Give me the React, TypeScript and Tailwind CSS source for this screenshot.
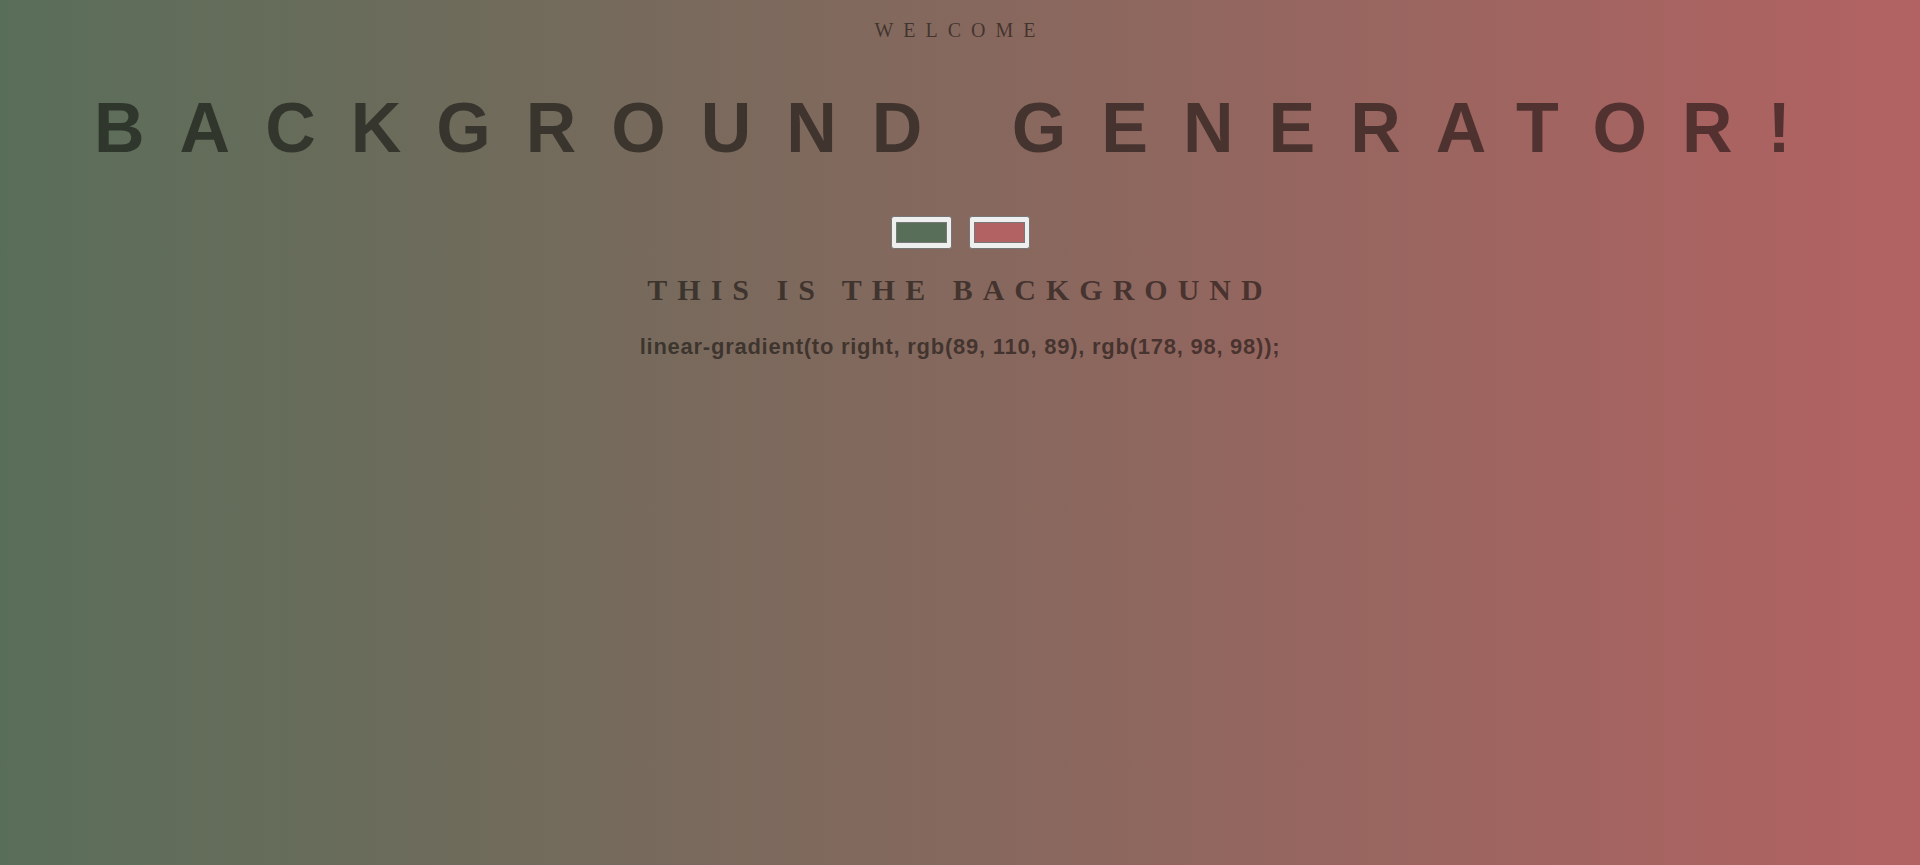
import { useState } from "react";

const hexToRgb = (hex: string) => {
  const n = parseInt(hex.slice(1), 16);
  return `rgb(${(n >> 16) & 255}, ${(n >> 8) & 255}, ${n & 255})`;
};

export default function App() {
  const [color1, setColor1] = useState("#596e59");
  const [color2, setColor2] = useState("#b26262");

  const gradient = `linear-gradient(to right, ${hexToRgb(color1)}, ${hexToRgb(color2)})`;

  return (
    <div
      className="min-h-screen w-full text-center uppercase text-black/50"
      style={{ background: gradient }}
    >
      <p className="pt-[19px] text-[20px] leading-[23px] tracking-[10px] font-['Liberation_Serif',serif]">
        Welcome
      </p>

      <h1 className="mt-[46px] text-[70px] leading-[80px] font-bold tracking-[35px] font-['Liberation_Sans',Arial,sans-serif]">
        Background Generator!
      </h1>

      <div className="mt-[48px] flex justify-center gap-[17px]">
        <input
          type="color"
          value={color1}
          onChange={(e) => setColor1(e.target.value)}
          className="w-[61px] h-[33px] px-[2px] py-[1px] bg-[#efefef] border border-[#767676] rounded-[3px] cursor-pointer"
        />
        <input
          type="color"
          value={color2}
          onChange={(e) => setColor2(e.target.value)}
          className="w-[61px] h-[33px] px-[2px] py-[1px] bg-[#efefef] border border-[#767676] rounded-[3px] cursor-pointer"
        />
      </div>

      <h2 className="mt-[24px] text-[30px] leading-[34px] font-bold tracking-[10px] font-['Liberation_Serif',serif]">
        This is the background
      </h2>

      <h3 className="mt-[27px] text-[22px] leading-[25px] font-bold tracking-[0.75px] normal-case font-['Liberation_Sans',Arial,sans-serif]">
        {gradient};
      </h3>
    </div>
  );
}
